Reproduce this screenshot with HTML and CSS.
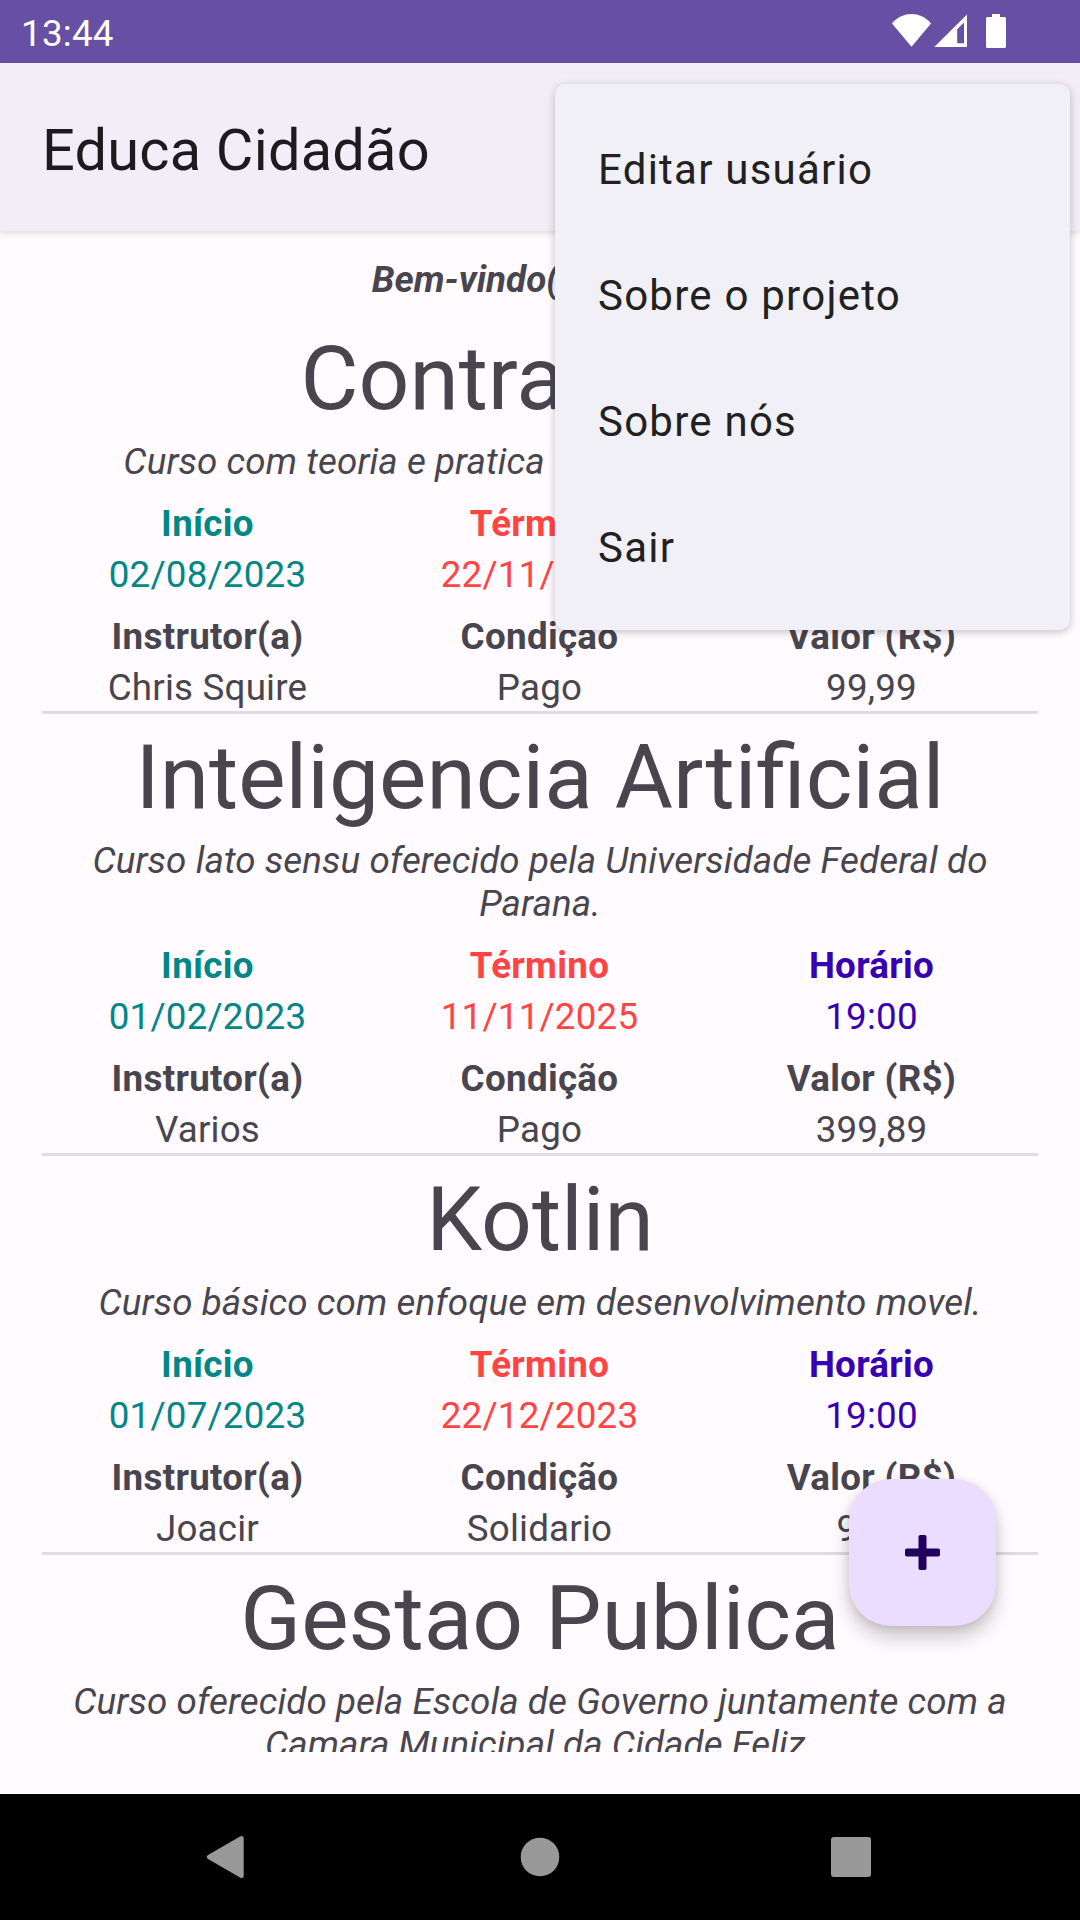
FILE: index.html
```html
<!DOCTYPE html>
<html lang="pt-BR">
<head>
<meta charset="utf-8">
<title>Educa Cidadão</title>
<link rel="stylesheet" href="styles.css">
</head>
<body>
<div class="screen">
  <header class="status">
    <span class="clock">13:44</span>
    <svg class="status-icons" width="116" height="36" viewBox="0 0 116 36" fill="#fff">
      <path d="M0 9.400C5 3.400 12 0 19.500 0S34 3.400 39 9.400L19.500 32.700Z"/>
      <path fill-rule="evenodd" d="M75 .4V33H42.200ZM72 8.400L65.200 15.200V29.300H72Z"/>
      <path d="M100 0h8v3h4.500q1.500 0 1.500 1.500V32.500q0 1.500-1.500 1.500h-17q-1.500 0-1.500-1.500V4.500q0-1.500 1.500-1.500h4.500Z"/>
    </svg>
  </header>
  <div class="appbar"><h1 class="app-title">Educa Cidadão</h1></div>
  <main class="content">
    <p class="welcome">Bem-vindo(a), Joacir</p>
    <div class="courses">
      <article class="course">
        <h2 class="name">Contrabaixo</h2>
        <p class="desc">Curso com teoria e pratica &nbsp; em contrabaixo eletrico.</p>
        <dl class="facts">
          <div class="fact start"><dt>Início</dt><dd>02/08/2023</dd></div>
          <div class="fact end"><dt>Término</dt><dd>22/11/2023</dd></div>
          <div class="fact time"><dt>Horário</dt><dd>19:00</dd></div>
          <div class="fact"><dt>Instrutor(a)</dt><dd>Chris Squire</dd></div>
          <div class="fact"><dt>Condição</dt><dd>Pago</dd></div>
          <div class="fact"><dt>Valor (R$)</dt><dd>99,99</dd></div>
        </dl>
      </article>
      <article class="course">
        <h2 class="name">Inteligencia Artificial</h2>
        <p class="desc">Curso lato sensu oferecido pela Universidade Federal do Parana.</p>
        <dl class="facts">
          <div class="fact start"><dt>Início</dt><dd>01/02/2023</dd></div>
          <div class="fact end"><dt>Término</dt><dd>11/11/2025</dd></div>
          <div class="fact time"><dt>Horário</dt><dd>19:00</dd></div>
          <div class="fact"><dt>Instrutor(a)</dt><dd>Varios</dd></div>
          <div class="fact"><dt>Condição</dt><dd>Pago</dd></div>
          <div class="fact"><dt>Valor (R$)</dt><dd>399,89</dd></div>
        </dl>
      </article>
      <article class="course">
        <h2 class="name">Kotlin</h2>
        <p class="desc">Curso básico com enfoque em desenvolvimento movel.</p>
        <dl class="facts">
          <div class="fact start"><dt>Início</dt><dd>01/07/2023</dd></div>
          <div class="fact end"><dt>Término</dt><dd>22/12/2023</dd></div>
          <div class="fact time"><dt>Horário</dt><dd>19:00</dd></div>
          <div class="fact"><dt>Instrutor(a)</dt><dd>Joacir</dd></div>
          <div class="fact"><dt>Condição</dt><dd>Solidario</dd></div>
          <div class="fact"><dt>Valor (R$)</dt><dd>9,99</dd></div>
        </dl>
      </article>
      <article class="course">
        <h2 class="name">Gestao Publica</h2>
        <p class="desc">Curso oferecido pela Escola de Governo juntamente com a Camara Municipal da Cidade Feliz.</p>
      </article>
    </div>
  </main>
  <nav class="navbar">
    <svg width="1080" height="126" viewBox="0 0 1080 126" fill="#999">
      <path d="M240.500 42.200L208 61Q205.500 63 208 65L240.500 83.800Q243.700 85 243.700 81.500V44.500Q243.700 41 240.500 42.200Z"/>
      <circle cx="540" cy="63" r="19.300"/>
      <rect x="831" y="43" width="40" height="40" rx="3"/>
    </svg>
  </nav>
  <ul class="menu">
    <li>Editar usuário</li>
    <li>Sobre o projeto</li>
    <li>Sobre nós</li>
    <li>Sair</li>
  </ul>
  <button class="fab" aria-label="Adicionar">
    <svg width="35" height="35" viewBox="0 0 35 35" fill="#21005d">
      <rect x="13.500" y="0" width="8" height="35" rx="1.800"/>
      <rect x="0" y="13.500" width="35" height="8" rx="1.800"/>
    </svg>
  </button>
</div>
</body>
</html>
```
FILE: styles.css
```css
* { box-sizing: border-box; margin: 0; padding: 0; }
body { font-family: Roboto, "Liberation Sans", sans-serif; background: #fffbfe; }
.screen {
  position: relative;
  display: flex;
  flex-direction: column;
  width: 1080px;
  height: 1920px;
  overflow: hidden;
  color: #49454f;
  font-size: 36.75px;
  line-height: 43px;
}
.status {
  display: flex;
  justify-content: space-between;
  height: 63px;
  padding: 14px 72px 0 21px;
  background: #6750a4;
  color: #fff;
}
.clock { margin-top: -2px; letter-spacing: .25px; }
.appbar {
  display: flex;
  align-items: center;
  height: 168px;
  padding: 5px 42px 0;
  background: #f3edf7;
  box-shadow: 0 2px 7px rgba(0, 0, 0, .14);
  z-index: 1;
}
.app-title { font-size: 57.75px; line-height: 68px; font-weight: 400; letter-spacing: .2px; color: #1c1b1f; }
.content {
  display: flex;
  flex-direction: column;
  flex: 1;
  min-height: 0;
  padding: 27px 42px 42px;
  text-align: center;
}
.welcome { font-weight: 700; font-style: italic; margin-bottom: 14px; }
.courses { flex: 1; min-height: 0; overflow: hidden; }
.course { padding: 11px 0 2px; border-bottom: 3px solid #e0dbe0; }
.name { font-size: 89.25px; line-height: 105px; font-weight: 400; white-space: nowrap; }
.desc { margin: 9px 0 19px; padding: 0 21px; font-style: italic; letter-spacing: .09px; }
.facts { display: grid; grid-template-columns: repeat(3, 1fr); row-gap: 19px; }
.fact { display: flex; flex-direction: column; gap: 8px; padding-right: 1px; letter-spacing: .2px; }
.fact dt { font-weight: 700; letter-spacing: .3px; }
.start { color: #018786; }
.end { color: #f44; }
.time { color: #3700b3; }
.navbar { height: 126px; background: #000; }
.navbar svg { display: block; }
.menu {
  position: absolute;
  top: 84px;
  left: 555px;
  z-index: 2;
  width: 515px;
  height: 546px;
  padding: 21px 43px;
  list-style: none;
  border-radius: 10px;
  background: #f2f0f7;
  box-shadow: 0 2px 8px rgba(0, 0, 0, .24);
  color: #212121;
  font-size: 42px;
  letter-spacing: 1.24px;
}
.menu li { line-height: 130px; height: 126px; }
.fab {
  position: absolute;
  top: 1479px;
  left: 849px;
  display: flex;
  align-items: center;
  justify-content: center;
  width: 147px;
  height: 147px;
  border: 0;
  border-radius: 42px;
  background: #eaddff;
  box-shadow: 0 12px 20px rgba(0, 0, 0, .2), 0 2px 10px rgba(0, 0, 0, .1);
}
```
